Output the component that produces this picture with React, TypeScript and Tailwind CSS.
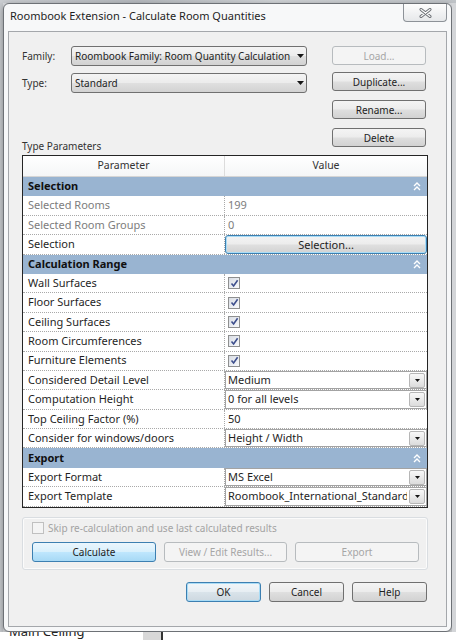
import React from "react";

type Variant = "normal" | "disabled" | "hot" | "def";

const BTN: Record<Variant, string> = {
  normal:
    "border-[#707070] bg-[linear-gradient(#f4f4f4_0%,#ececec_48%,#dfdfdf_52%,#d2d2d2_100%)] text-[#1e1e1e]",
  disabled: "border-[#b7bbbe] bg-[#f4f4f4] text-[#a6a6a6]",
  hot: "border-[#3c7fb1] bg-[linear-gradient(#eaf6fd_0%,#d9f0fc_48%,#bee6fd_52%,#a7d9f5_100%)] text-[#1e1e1e]",
  def: "border-[#3c7fb1] bg-[linear-gradient(#f1f6f9_0%,#e7eef3_48%,#d9e3ea_52%,#cdd8e0_100%)] text-[#1e1e1e] shadow-[inset_0_0_0_1px_#a9dcf6]",
};

function Button({
  label,
  variant = "normal",
  small = true,
  className = "",
}: {
  label: string;
  variant?: Variant;
  small?: boolean;
  className?: string;
}) {
  return (
    <button
      type="button"
      className={`flex items-center justify-center rounded-[3px] border leading-none ${
        small ? "text-[10px]" : "text-[11px]"
      } ${BTN[variant]} ${className}`}
    >
      {label}
    </button>
  );
}

type Row =
  | { kind: "group"; label: string }
  | { kind: "text"; label: string; value: string; muted?: boolean }
  | { kind: "button"; label: string; value: string }
  | { kind: "check"; label: string }
  | { kind: "select"; label: string; value: string };

const ROWS: Row[] = [
  { kind: "group", label: "Selection" },
  { kind: "text", label: "Selected Rooms", value: "199", muted: true },
  { kind: "text", label: "Selected Room Groups", value: "0", muted: true },
  { kind: "button", label: "Selection", value: "Selection..." },
  { kind: "group", label: "Calculation Range" },
  { kind: "check", label: "Wall Surfaces" },
  { kind: "check", label: "Floor Surfaces" },
  { kind: "check", label: "Ceiling Surfaces" },
  { kind: "check", label: "Room Circumferences" },
  { kind: "check", label: "Furniture Elements" },
  { kind: "select", label: "Considered Detail Level", value: "Medium" },
  { kind: "select", label: "Computation Height", value: "0 for all levels" },
  { kind: "text", label: "Top Ceiling Factor (%)", value: "50" },
  { kind: "select", label: "Consider for windows/doors", value: "Height / Width" },
  { kind: "group", label: "Export" },
  { kind: "select", label: "Export Format", value: "MS Excel" },
  {
    kind: "select",
    label: "Export Template",
    value: "Roombook_International_Standard.xlsx",
  },
];

const Triangle = () => (
  <svg width="7" height="4" viewBox="0 0 7 4" className="shrink-0">
    <path d="M0 0h7L3.5 4z" fill="#151515" />
  </svg>
);

const Chevrons = () => (
  <svg width="8" height="9" viewBox="0 0 8 9" className="shrink-0">
    <path
      d="M1 4L4 1l3 3M1 8l3-3 3 3"
      stroke="#fff"
      strokeWidth="1.4"
      fill="none"
    />
  </svg>
);

function CheckBox({ checked, disabled }: { checked?: boolean; disabled?: boolean }) {
  return (
    <div
      className={`w-[12px] h-[12px] shrink-0 border flex items-center justify-center ${
        disabled
          ? "border-[#c0c0c0] bg-[#f4f4f4]"
          : "border-[#8e8f8f] bg-[linear-gradient(135deg,#d9dde4,#f8f9fb)]"
      }`}
    >
      {checked && (
        <svg width="9" height="9" viewBox="0 0 9 9">
          <path d="M1.5 4.5L3.6 7 7.6 1.2" stroke="#3e4f8d" strokeWidth="1.6" fill="none" />
        </svg>
      )}
    </div>
  );
}

function Combo({ value }: { value: string }) {
  return (
    <div className="w-[236px] h-[20px] rounded-[3px] border border-[#707070] bg-[linear-gradient(#f4f4f4_0%,#ececec_48%,#dfdfdf_52%,#d2d2d2_100%)] flex items-center pl-[3px] pr-[2px] gap-1">
      <span className="flex-1 text-[10px] text-[#1e1e1e] whitespace-nowrap">{value}</span>
      <Triangle />
    </div>
  );
}

function ParamRow({ row }: { row: Row }) {
  if (row.kind === "group") {
    return (
      <div className="h-[19.4px] flex items-center justify-between bg-[#99b4d1] pl-[5px] pr-[6px]">
        <span className="font-bold text-[11px] text-[#101010]">{row.label}</span>
        <Chevrons />
      </div>
    );
  }
  const muted = row.kind === "text" && row.muted;
  return (
    <div className="h-[19.4px] flex border-b border-dotted border-[#a9a9a9] bg-white">
      <div
        className={`w-[202px] shrink-0 border-r border-dotted border-[#a9a9a9] flex items-center pl-[5px] text-[11px] whitespace-nowrap ${
          muted ? "text-[#7d7d7d]" : "text-[#1f1f1f]"
        }`}
      >
        {row.label}
      </div>
      <div className="flex-1 min-w-0 flex items-center text-[11px]">
        {row.kind === "text" && (
          <span className={`pl-[3px] ${muted ? "text-[#7d7d7d]" : "text-[#1f1f1f]"}`}>
            {row.value}
          </span>
        )}
        {row.kind === "check" && (
          <div className="pl-[3px]">
            <CheckBox checked />
          </div>
        )}
        {row.kind === "button" && (
          <Button
            label={row.value}
            small={false}
            className="w-full h-full shadow-[inset_0_0_0_1px_#a9dcf6] !border-[#3c7fb1]"
          />
        )}
        {row.kind === "select" && (
          <div className="w-full h-full border border-[#a3a3a3] flex items-center pl-[2px] pr-[1px] gap-[2px] bg-white">
            <span className="flex-1 min-w-0 overflow-hidden whitespace-nowrap text-[#1f1f1f]">
              {row.value}
            </span>
            <div className="w-[16px] h-[15px] shrink-0 rounded-[2px] border border-[#b6b6b6] bg-[linear-gradient(#f8f8f8,#dcdcdc)] flex items-center justify-center">
              <svg width="5" height="3" viewBox="0 0 5 3">
                <path d="M0 0h5L2.5 3z" fill="#151515" />
              </svg>
            </div>
          </div>
        )}
      </div>
    </div>
  );
}

function Window() {
  return (
    <div className="w-[449px] h-[629px] shrink-0 rounded-[6px] border border-[#6d7176] bg-[#f7f8f9] flex flex-col shadow-[0_2px_6px_rgba(0,0,0,0.35)]">
      {/* title bar */}
      <div className="h-[27px] shrink-0 flex items-start pl-[6px] pr-[4px]">
        <span className="mt-[4px] leading-[16px] text-[11px] text-[#1e1e1e] whitespace-nowrap">
          Roombook Extension - Calculate Room Quantities
        </span>
        <div className="ml-auto w-[44px] h-[18px] rounded-b-[4px] border border-t-0 border-[#8d9298] bg-[linear-gradient(#fdfdfd,#e6e8ea)] flex items-center justify-center">
          <svg width="13" height="10" viewBox="0 0 13 10">
            <path d="M2 1.5l9 7M11 1.5l-9 7" stroke="#6a6e73" strokeWidth="3" strokeLinecap="round" />
            <path d="M2 1.5l9 7M11 1.5l-9 7" stroke="#fbfbfb" strokeWidth="1.2" strokeLinecap="round" />
          </svg>
        </div>
      </div>

      {/* client */}
      <div className="ml-[4px] w-[439px] h-[596px] shrink-0 border border-[#a4a7ab] bg-[#f0f0f0] pl-[13px] pt-[14px] flex flex-col">
        <div className="flex">
          <div className="w-[285px] flex flex-col">
            <div className="flex items-center h-[20px]">
              <span className="w-[49px] text-[10px] text-[#333]">Family:</span>
              <Combo value="Roombook Family: Room Quantity Calculation" />
            </div>
            <div className="flex items-center h-[20px] mt-[7px]">
              <span className="w-[49px] text-[10px] text-[#333]">Type:</span>
              <Combo value="Standard" />
            </div>
            <div className="flex-1" />
            <span className="text-[10px] leading-[13px] text-[#333] mb-[-6px]">
              Type Parameters
            </span>
          </div>
          <div className="ml-[25px] w-[94px] flex flex-col">
            <Button label="Load..." variant="disabled" className="h-[19px]" />
            <Button label="Duplicate..." className="h-[19px] mt-[7px]" />
            <Button label="Rename..." className="h-[19px] mt-[9px]" />
            <Button label="Delete" className="h-[19px] mt-[9px]" />
          </div>
        </div>

        {/* parameter grid */}
        <div className="mt-[8px] w-[406px] border border-[#252525] bg-white flex flex-col">
          <div className="h-[21px] flex border-b border-[#d5d5d5] bg-[linear-gradient(#ffffff,#f5f6f7)] text-[10.5px] text-[#333]">
            <div className="w-[202px] shrink-0 border-r border-[#dcdcdc] flex items-center justify-center">
              Parameter
            </div>
            <div className="flex-1 flex items-center justify-center">Value</div>
          </div>
          {ROWS.map((row) => (
            <ParamRow key={row.label + row.kind} row={row} />
          ))}
        </div>

        {/* calculation box */}
        <div className="mt-[9px] w-[406px] h-[53px] rounded-[3px] border border-[#d9dde1] shadow-[inset_0_0_0_1px_#fbfbfb] pl-[9px] pt-[4px] flex flex-col">
          <div className="h-[13px] flex items-center gap-[4px]">
            <CheckBox disabled />
            <span className="text-[10px] text-[#a3a3a3] whitespace-nowrap">
              Skip re-calculation and use last calculated results
            </span>
          </div>
          <div className="mt-[7px] flex gap-[8px]">
            <Button label="Calculate" variant="hot" className="w-[124px] h-[20px]" />
            <Button label="View / Edit Results..." variant="disabled" className="w-[123px] h-[20px]" />
            <Button label="Export" variant="disabled" className="w-[124px] h-[20px]" />
          </div>
        </div>

        <div className="mt-[12px] w-[405px] flex justify-end gap-[8px]">
          <Button label="OK" variant="def" className="w-[75px] h-[20px]" />
          <Button label="Cancel" className="w-[75px] h-[20px]" />
          <Button label="Help" className="w-[75px] h-[20px]" />
        </div>
      </div>
    </div>
  );
}

export default function App() {
  return (
    <div className="w-[456px] h-[640px] overflow-hidden bg-[#d9dbde] font-['Noto_Sans',sans-serif] flex flex-col">
      <div className="h-[3px] shrink-0 bg-[linear-gradient(90deg,#c9ccd0,#b5b9be_30%,#cfd2d5_60%,#bfc3c7)]" />
      <div className="flex shrink-0">
        <div className="w-[3px] shrink-0 bg-[#c6c9cd]" />
        <Window />
        <div className="flex-1 bg-[#d3d5d8]" />
      </div>
      <div className="flex-1 overflow-hidden bg-white flex">
        <span className="ml-[9px] mt-[-9px] text-[13px] leading-[16px] text-[#222] whitespace-nowrap">
          Main Ceiling
        </span>
        <div className="ml-[58px] w-[18px] bg-[#d8d8d8]" />
        <div className="w-[2px] bg-[#333]" />
      </div>
    </div>
  );
}
